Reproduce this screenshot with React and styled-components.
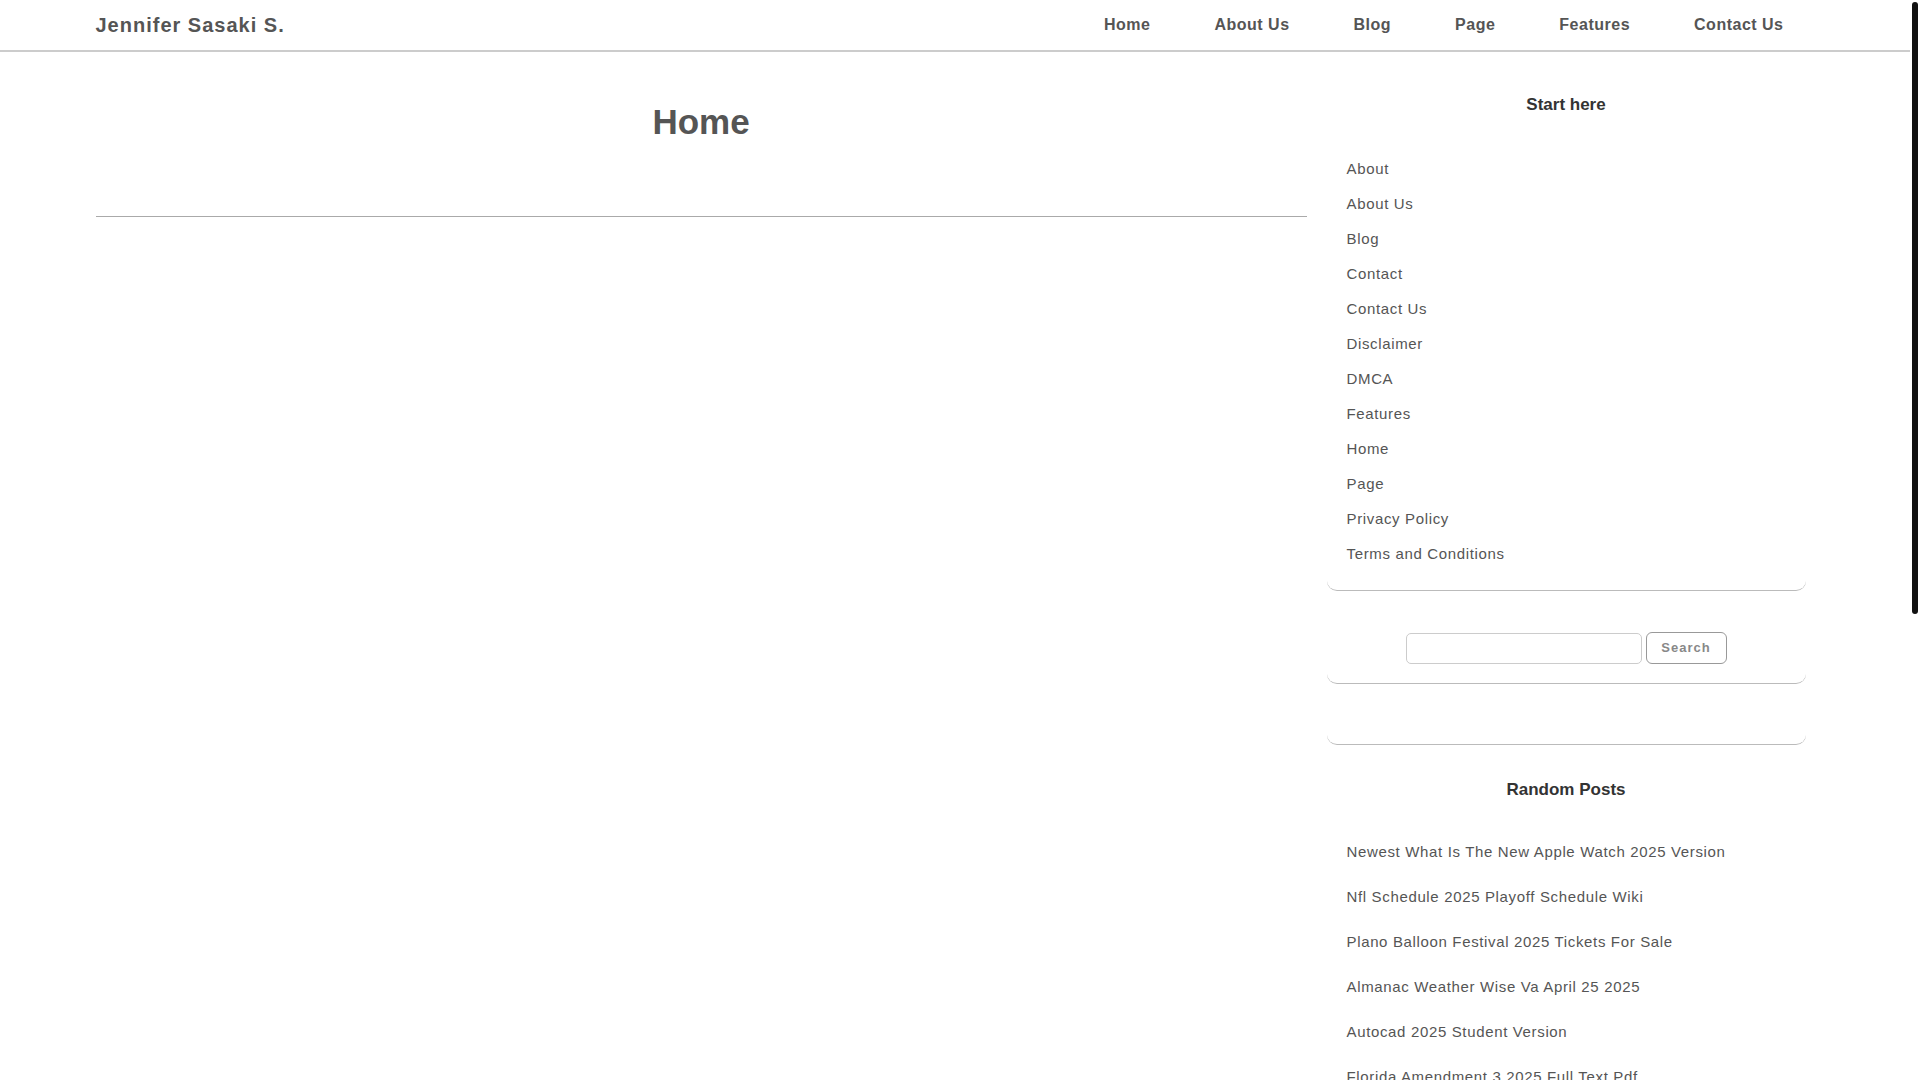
import React from 'react';
import styled, { createGlobalStyle } from 'styled-components';

const GlobalStyle = createGlobalStyle`
  html, body {
    margin: 0;
    padding: 0;
    background: #fff;
  }
  body {
    width: calc(100% - 10px);
    font-family: "Liberation Sans", Arial, sans-serif;
    color: #555;
  }
  a {
    text-decoration: none;
    color: inherit;
  }
`;

// the browser scrollbar seen at the right edge of the screenshot
const ScrollTrack = styled.div`
  position: fixed;
  top: 0;
  right: 0;
  width: 10px;
  height: 100vh;
  background: #fff;
`;

const ScrollThumb = styled.div`
  position: absolute;
  top: 2px;
  left: 2px;
  width: 6px;
  height: 612px;
  border-radius: 3px;
  background: #111;
`;

const Header = styled.header`
  height: 50px;
  border-bottom: 2px solid #ccc;
`;

const HeaderInner = styled.div`
  width: 90%;
  height: 100%;
  margin: 0 auto;
  display: flex;
  align-items: center;
  justify-content: space-between;
`;

const Brand = styled.a`
  font-size: 20px;
  font-weight: bold;
  letter-spacing: 1px;
  color: #555;
`;

const Nav = styled.nav`
  display: flex;
  align-items: center;
`;

const NavLink = styled.a`
  padding: 0 32px;
  font-size: 16px;
  font-weight: bold;
  letter-spacing: 0.5px;
  color: #555;

  &:last-child {
    padding-right: 31px;
  }
`;

const Layout = styled.div`
  width: 90%;
  margin: 0 auto;
  display: grid;
  grid-template-columns: 1211px 479px;
  column-gap: 20px;
  align-items: start;
`;

const Main = styled.main``;

const PageHead = styled.div`
  padding: 50px 0 74px;
  border-bottom: 1px solid #aaa;
  text-align: center;
`;

const PageTitle = styled.h1`
  margin: 0;
  font-size: 35px;
  line-height: 40px;
  font-weight: bold;
  color: #555;
`;

const Sidebar = styled.aside`
  padding-top: 8px;
`;

const Widget = styled.section`
  padding: 34px 0 ${(p) => p.$bottom ?? 19}px;
  border-bottom: 1px solid #bbb;
  border-radius: 10px;
`;

const WidgetTitle = styled.h3`
  margin: 0;
  font-size: 17px;
  line-height: 22px;
  font-weight: bold;
  color: #333;
  text-align: center;
`;

const LinkList = styled.ul`
  list-style: none;
  margin: ${(p) => p.$top}px 0 0;
  padding: 0;
`;

const LinkItem = styled.li`
  height: ${(p) => p.$h}px;
  display: flex;
  align-items: center;
  padding-left: 20px;
  font-size: 15px;
  letter-spacing: 0.65px;
  color: #555;
  white-space: nowrap;
`;

const SearchForm = styled.form`
  margin-top: 8px;
  display: flex;
  justify-content: center;
  gap: 4px;
`;

const SearchInput = styled.input`
  box-sizing: border-box;
  width: 236px;
  height: 31px;
  border: 1px solid #ccc;
  border-radius: 5px;
  background: #fff;
  outline: none;
`;

const SearchButton = styled.button`
  box-sizing: border-box;
  width: 81px;
  height: 32px;
  margin-top: -1px;
  border: 1px solid #999;
  border-radius: 6px;
  background: #fff;
  font-family: "Liberation Sans", Arial, sans-serif;
  font-size: 13px;
  font-weight: bold;
  letter-spacing: 1px;
  color: #888;
`;

const Footer = styled.footer`
  margin-top: 40px;
  border-top: 2px solid #ccc;
  padding: 38px 0;
  text-align: center;
  font-size: 14px;
  letter-spacing: 0.5px;
  color: #777;
`;

const menu = ['Home', 'About Us', 'Blog', 'Page', 'Features', 'Contact Us'];

const pages = [
  'About',
  'About Us',
  'Blog',
  'Contact',
  'Contact Us',
  'Disclaimer',
  'DMCA',
  'Features',
  'Home',
  'Page',
  'Privacy Policy',
  'Terms and Conditions',
];

const randomPosts = [
  'Newest What Is The New Apple Watch 2025 Version',
  'Nfl Schedule 2025 Playoff Schedule Wiki',
  'Plano Balloon Festival 2025 Tickets For Sale',
  'Almanac Weather Wise Va April 25 2025',
  'Autocad 2025 Student Version',
  'Florida Amendment 3 2025 Full Text Pdf',
  'Best Family Suv 2025 Consumer Reports',
  'Chinese New Year 2025 Animal Meaning',
  'Honda Cr V 2025 Hybrid Review',
  'Calendar 2025 With Holidays Printable',
  'Mlb Opening Day 2025 Tickets',
  'Toyota Camry 2025 Release Date Usa',
  'Masters 2025 Tee Times Saturday',
  'Easter Sunday 2025 Date Calendar',
  'Met Gala 2025 Theme Announcement',
  'Ford Bronco 2025 Colors Chart',
  'Super Bowl 2025 Halftime Show Lineup',
  'Tax Brackets 2025 Married Filing Jointly',
  'Kentucky Derby 2025 Post Time',
  'Coachella 2025 Weekend 2 Schedule',
];

function App() {
  return (
    <>
      <GlobalStyle />
      <Header>
        <HeaderInner>
          <Brand href="#">Jennifer Sasaki S.</Brand>
          <Nav>
            {menu.map((item) => (
              <NavLink key={item} href="#">{item}</NavLink>
            ))}
          </Nav>
        </HeaderInner>
      </Header>

      <Layout>
        <Main>
          <PageHead>
            <PageTitle>Home</PageTitle>
          </PageHead>
        </Main>

        <Sidebar>
          <Widget>
            <WidgetTitle>Start here</WidgetTitle>
            <LinkList $top={34.5}>
              {pages.map((p) => (
                <LinkItem key={p} $h={35}><a href="#">{p}</a></LinkItem>
              ))}
            </LinkList>
          </Widget>

          <Widget>
            <SearchForm onSubmit={(e) => e.preventDefault()}>
              <SearchInput type="text" />
              <SearchButton type="submit">Search</SearchButton>
            </SearchForm>
          </Widget>

          {/* empty widget area */}
          <Widget $bottom={26} />

          <Widget>
            <WidgetTitle>Random Posts</WidgetTitle>
            <LinkList $top={28}>
              {randomPosts.map((p) => (
                <LinkItem key={p} $h={45}><a href="#">{p}</a></LinkItem>
              ))}
            </LinkList>
          </Widget>
        </Sidebar>
      </Layout>

      <Footer>Copyright © 2025 Jennifer Sasaki S.</Footer>

      <ScrollTrack>
        <ScrollThumb />
      </ScrollTrack>
    </>
  );
}

export default App;
